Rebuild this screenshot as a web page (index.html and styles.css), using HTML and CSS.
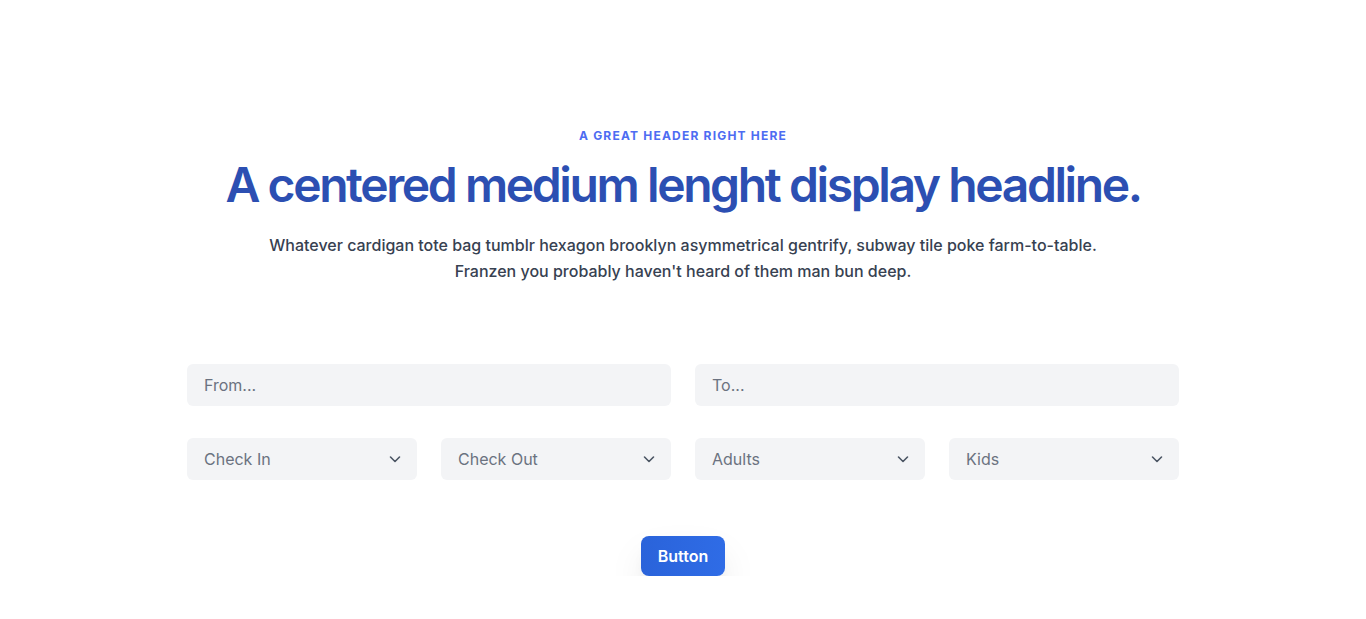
FILE: index.html
```html
<!DOCTYPE html>
<html lang="en">
<head>
<meta charset="utf-8">
<title>Booking</title>
<link rel="stylesheet" href="styles.css">
</head>
<body>
<section class="hero">
  <div class="intro">
    <p class="eyebrow">A great header right here</p>
    <h1 class="headline">A centered medium lenght display headline.</h1>
    <p class="lead">Whatever cardigan tote bag tumblr hexagon brooklyn asymmetrical gentrify, subway tile poke farm-to-table.<br>Franzen you probably haven't heard of them man bun deep.</p>
  </div>
  <form class="form">
    <div class="row two">
      <input class="field" type="text" placeholder="From...">
      <input class="field" type="text" placeholder="To...">
    </div>
    <div class="row four">
      <div class="select"><span>Check In</span><svg viewBox="0 0 20 20" width="20" height="20"><path d="M5.5 8 L10 12.5 L14.5 8" fill="none" stroke="#4b5563" stroke-width="1.6" stroke-linecap="round" stroke-linejoin="round"/></svg></div>
      <div class="select"><span>Check Out</span><svg viewBox="0 0 20 20" width="20" height="20"><path d="M5.5 8 L10 12.5 L14.5 8" fill="none" stroke="#4b5563" stroke-width="1.6" stroke-linecap="round" stroke-linejoin="round"/></svg></div>
      <div class="select"><span>Adults</span><svg viewBox="0 0 20 20" width="20" height="20"><path d="M5.5 8 L10 12.5 L14.5 8" fill="none" stroke="#4b5563" stroke-width="1.6" stroke-linecap="round" stroke-linejoin="round"/></svg></div>
      <div class="select"><span>Kids</span><svg viewBox="0 0 20 20" width="20" height="20"><path d="M5.5 8 L10 12.5 L14.5 8" fill="none" stroke="#4b5563" stroke-width="1.6" stroke-linecap="round" stroke-linejoin="round"/></svg></div>
    </div>
    <div class="actions">
      <button class="button" type="button">Button</button>
    </div>
  </form>
</section>
</body>
</html>
```
FILE: styles.css
```css
* { box-sizing: border-box; }
html, body { margin: 0; padding: 0; }
body {
  font-family: Inter, "Noto Sans", sans-serif;
  background: #ffffff;
  color: #374151;
}
.hero {
  width: 992px;
  margin: 0 auto;
  padding-top: 128px;
}
.intro { text-align: center; }
.eyebrow {
  margin: 0;
  font-size: 12px;
  line-height: 16px;
  font-weight: 700;
  letter-spacing: 0.1em;
  text-transform: uppercase;
  color: #4d6cf2;
}
.headline {
  margin: 16px 0 0;
  font-size: 48px;
  line-height: 50px;
  font-weight: 600;
  letter-spacing: -0.05em;
  color: #2c4fb2;
}
.lead {
  margin: 22px 0 0;
  font-size: 16px;
  line-height: 26px;
  font-weight: 500;
  color: #374151;
}
.form { margin-top: 80px; }
.row { display: grid; gap: 24px; }
.row.two { grid-template-columns: 1fr 1fr; }
.row.four { grid-template-columns: repeat(4, 1fr); margin-top: 32px; }
.field, .select {
  height: 42px;
  border: 0;
  border-radius: 6px;
  background: #f3f4f6;
  font-family: inherit;
  font-size: 16px;
  color: #6b7280;
  padding: 0 12px 0 17px;
  outline: none;
}
.field::placeholder { color: #6b7280; }
.select {
  display: flex;
  align-items: center;
  justify-content: space-between;
}
.actions {
  display: flex;
  justify-content: center;
  margin-top: 56px;
}
.button {
  height: 40px;
  padding: 0 17px;
  border: 0;
  border-radius: 8px;
  background: linear-gradient(90deg, #2a63da, #2f6ce6);
  color: #ffffff;
  font-family: inherit;
  font-size: 16px;
  font-weight: 600;
  box-shadow: 0 20px 40px -8px rgba(0,0,0,0.18), 0 10px 14px -6px rgba(0,0,0,0.08);
}
```
